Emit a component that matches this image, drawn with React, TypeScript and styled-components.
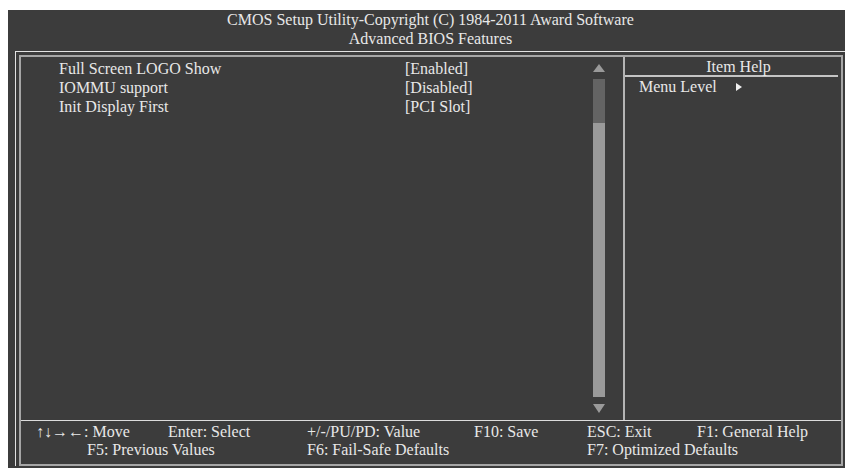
import { createGlobalStyle, styled } from 'styled-components';

const GlobalStyle = createGlobalStyle`
  html, body {
    margin: 0;
    background: #ffffff;
    overflow: hidden;
  }
`;

const Screen = styled.div`
  margin: 10px 0 0 8px;
  height: 458px;
  background-color: #3c3c3c;
  overflow: hidden;
  color: #e8e8e8;
  font-family: "Liberation Serif", "Times New Roman", serif;
  font-size: 16px;
  line-height: 19px;
`;

const Title = styled.div`
  height: 41px;
  padding-left: 8px;
  text-align: center;
`;

const Frame = styled.div`
  margin-left: 7px;
  border-top: 1px solid #e2e2e2;
  border-left: 1px solid #e2e2e2;
  padding: 3px 0 0 3px;
`;

const Panel = styled.div`
  width: 824px;
  height: 411px;
  box-sizing: border-box;
  border: 2px solid #a6a6a6;
  display: flex;
  flex-direction: column;
`;

const Main = styled.div`
  flex: 1;
  display: flex;
`;

const ItemsArea = styled.div`
  width: 602px;
  display: flex;
`;

const ItemList = styled.div`
  flex: 1;
  padding: 2px 0 0 38px;
`;

const Item = styled.div`
  display: grid;
  grid-template-columns: 346px auto;
`;

const ScrollBar = styled.div`
  width: 12px;
  margin-right: 18px;
  padding-top: 7px;
  display: flex;
  flex-direction: column;
  align-items: center;
  gap: 7px;
`;

const Track = styled.div`
  width: 12px;
  height: 318px;
  display: flex;
  flex-direction: column;
  background-color: #9a9a9a;
`;

const Thumb = styled.div`
  height: 44px;
  background-color: #646464;
`;

const Divider = styled.div`
  width: 2px;
  background-color: #b4b4b4;
`;

const Help = styled.div`
  flex: 1;
`;

const HelpHeader = styled.div`
  height: 18px;
  margin-right: 3px;
  border-bottom: 2px solid #c4c4c4;
  padding-left: 14px;
  text-align: center;
`;

const HelpLine = styled.div`
  padding-left: 14px;
  display: flex;
  align-items: center;
  gap: 19px;
`;

const Footer = styled.div`
  height: 44px;
  box-sizing: border-box;
  border-top: 1px solid #dcdcdc;
  padding: 2px 0 0 15px;
  display: grid;
  grid-template-columns: 271px 280px 1fr;
  line-height: 18px;
  white-space: nowrap;
`;

const KeyGroup = styled.div`
  display: flex;
  flex-direction: column;
`;

const KeyRow = styled.div<{ $second?: number; $indent?: number }>`
  display: grid;
  grid-template-columns: ${p => (p.$second ? `${p.$second}px auto` : 'auto')};
  padding-left: ${p => p.$indent ?? 0}px;
`;

const Arrow = ({ dir, w, h, color }: { dir: 'up' | 'down' | 'right'; w: number; h: number; color: string }) => {
  const pts =
    dir === 'up' ? `0,${h} ${w / 2},0 ${w},${h}` :
    dir === 'down' ? `0,0 ${w},0 ${w / 2},${h}` :
    `0,0 ${w},${h / 2} 0,${h}`;
  return (
    <svg width={w} height={h} viewBox={`0 0 ${w} ${h}`} style={{ display: 'block' }}>
      <polygon points={pts} fill={color} />
    </svg>
  );
};

const items = [
  { label: 'Full Screen LOGO Show', value: '[Enabled]' },
  { label: 'IOMMU support', value: '[Disabled]' },
  { label: 'Init Display First', value: '[PCI Slot]' },
];

export default function App() {
  return (
    <>
      <GlobalStyle />
      <Screen>
        <Title>
          <div>CMOS Setup Utility-Copyright (C) 1984-2011 Award Software</div>
          <div>Advanced BIOS Features</div>
        </Title>
        <Frame>
          <Panel>
            <Main>
              <ItemsArea>
                <ItemList>
                  {items.map(item => (
                    <Item key={item.label}>
                      <span>{item.label}</span>
                      <span>{item.value}</span>
                    </Item>
                  ))}
                </ItemList>
                <ScrollBar>
                  <Arrow dir="up" w={12} h={8} color="#9a9a9a" />
                  <Track>
                    <Thumb />
                  </Track>
                  <Arrow dir="down" w={12} h={9} color="#9a9a9a" />
                </ScrollBar>
              </ItemsArea>
              <Divider />
              <Help>
                <HelpHeader>Item Help</HelpHeader>
                <HelpLine>
                  <span>Menu Level</span>
                  <Arrow dir="right" w={6} h={8} color="#f0f0f0" />
                </HelpLine>
              </Help>
            </Main>
            <Footer>
              <KeyGroup>
                <KeyRow $second={132}>
                  <span>↑↓→←: Move</span>
                  <span>Enter: Select</span>
                </KeyRow>
                <KeyRow $indent={51}>
                  <span>F5: Previous Values</span>
                </KeyRow>
              </KeyGroup>
              <KeyGroup>
                <KeyRow $second={167}>
                  <span>+/-/PU/PD: Value</span>
                  <span>F10: Save</span>
                </KeyRow>
                <KeyRow>
                  <span>F6: Fail-Safe Defaults</span>
                </KeyRow>
              </KeyGroup>
              <KeyGroup>
                <KeyRow $second={110}>
                  <span>ESC: Exit</span>
                  <span>F1: General Help</span>
                </KeyRow>
                <KeyRow>
                  <span>F7: Optimized Defaults</span>
                </KeyRow>
              </KeyGroup>
            </Footer>
          </Panel>
        </Frame>
      </Screen>
    </>
  );
}
